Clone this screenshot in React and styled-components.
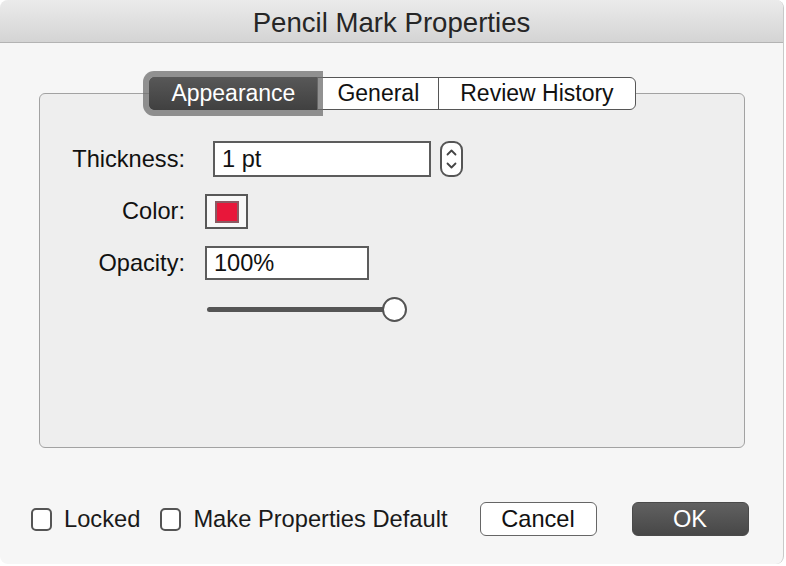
import React from 'react'
import styled, {createGlobalStyle} from 'styled-components'

const Global = createGlobalStyle`
    html, body {
        margin: 0;
        padding: 0;
        background: #ffffff;
        font-family: "Liberation Sans", Arial, sans-serif;
    }
`;

const Page = styled.div`
    width: 786px;
    height: 566px;
    display: flex;
    overflow: hidden;
`;

const Window = styled.div`
    width: 783px;
    height: 564px;
    display: flex;
    flex-direction: column;
    background: #f6f6f6;
    border-radius: 8px;
    border-right: 1px solid #c9c9c9;
    overflow: hidden;
`;

const TitleBar = styled.div`
    height: 43px;
    flex: none;
    display: flex;
    align-items: center;
    justify-content: center;
    background: linear-gradient(#ebebeb, #d4d4d4);
    border-bottom: 1px solid #b3b3b3;
    font-size: 27.6px;
    color: #262626;
    padding-top: 3px;
    box-sizing: border-box;
`;

const Body = styled.div`
    flex: 1;
    display: flex;
    flex-direction: column;
    padding: 34px 38px 0 39px;
`;

const TabRow = styled.div`
    display: flex;
    justify-content: center;
    position: relative;
    z-index: 1;
    padding-left: 1px;
`;

const Tabs = styled.div`
    display: flex;
    height: 33px;
    border: 1.5px solid #565656;
    border-radius: 6px;
    background: #ffffff;
    box-sizing: border-box;
`;

const Tab = styled.div`
    padding: 0 ${({pad}) => pad}px;
    display: flex;
    align-items: center;
    font-size: 23px;
    white-space: nowrap;
    color: ${({active}) => active ? '#ffffff' : '#111111'};
    background: ${({active}) => active ? 'linear-gradient(#585858, #404040)' : 'transparent'};
    border-left: ${({first}) => first ? 'none' : '1.5px solid #565656'};
    border-radius: ${({active}) => active ? '5px 0 0 5px' : '0'};
    box-shadow: ${({active}) => active ? '0 0 0 6px rgba(110,110,110,0.75)' : 'none'};
    margin: ${({active}) => active ? '-1px 0 -1px -1px' : '0'};
    position: relative;
    z-index: ${({active}) => active ? 2 : 1};
`;

const GroupBox = styled.div`
    margin-top: -17px;
    height: 355px;
    box-sizing: border-box;
    border: 1.5px solid #a2a2a2;
    border-radius: 6px;
    background: #eeeeee;
    padding-top: 47px;
`;

const Form = styled.div`
    display: grid;
    grid-template-columns: 145px auto;
    column-gap: 20px;
    row-gap: 17px;
    align-items: center;
`;

const Label = styled.div`
    justify-self: end;
    font-size: 23.6px;
    color: #111111;
`;

const Field = styled.div`
    display: flex;
    align-items: center;
    gap: 9px;
    margin-left: ${({indent}) => indent || 0}px;
`;

const TextInput = styled.div`
    width: ${({w}) => w}px;
    height: ${({h}) => h}px;
    box-sizing: border-box;
    border: 2px solid #5c5c5c;
    background: #ffffff;
    font-size: 23.6px;
    color: #111111;
    display: flex;
    align-items: center;
    padding-left: 7px;
`;

const Stepper = styled.div`
    width: 23px;
    height: 36px;
    box-sizing: border-box;
    border: 2px solid #555555;
    border-radius: 9px;
    background: #ffffff;
    display: flex;
    align-items: center;
    justify-content: center;
`;

const Swatch = styled.div`
    width: 43px;
    height: 35px;
    box-sizing: border-box;
    border: 2px solid #585858;
    background: #f8f8f8;
    display: flex;
    align-items: center;
    justify-content: center;
`;

const SwatchFill = styled.div`
    width: 24px;
    height: 22px;
    box-sizing: border-box;
    border: 2px solid #8b5a62;
    background: #e8173a;
`;

const Slider = styled.div`
    width: 200px;
    height: 24px;
    display: flex;
    align-items: center;
    margin-left: 2px;
`;

const Track = styled.div`
    width: 180px;
    height: 5px;
    border-radius: 3px;
    background: #555555;
    margin-right: -4px;
`;

const Knob = styled.div`
    width: 25px;
    height: 25px;
    box-sizing: border-box;
    border-radius: 50%;
    border: 2px solid #545454;
    background: #ffffff;
`;

const Footer = styled.div`
    display: flex;
    align-items: center;
    margin: 54px -6px 0 -8px;
    height: 34px;
`;

const Check = styled.label`
    display: flex;
    align-items: center;
    flex: none;
    gap: 12px;
    font-size: 23.7px;
    white-space: nowrap;
    color: #1a1a1a;
    margin-right: ${({mr}) => mr}px;
`;

const Box = styled.span`
    width: 21px;
    height: 23px;
    box-sizing: border-box;
    border: 2px solid #555555;
    border-radius: 5px;
    background: #ffffff;
`;

const Button = styled.div`
    width: 117px;
    height: 34px;
    flex: none;
    box-sizing: border-box;
    border-radius: 6px;
    display: flex;
    align-items: center;
    justify-content: center;
    font-size: 23.6px;
    margin-left: ${({ml}) => ml}px;
    color: ${({primary}) => primary ? '#ffffff' : '#111111'};
    background: ${({primary}) => primary ? 'linear-gradient(#616161, #474747)' : '#ffffff'};
    border: 1.5px solid ${({primary}) => primary ? '#4a4a4a' : '#666666'};
`;

function Chevrons() {
    return (
        <svg width="13" height="26" viewBox="0 0 13 26">
            <path d="M2.5 8.5 L6.5 4.5 L10.5 8.5" fill="none" stroke="#444" strokeWidth="1.8" strokeLinecap="round" strokeLinejoin="round" />
            <path d="M2.5 17.5 L6.5 21.5 L10.5 17.5" fill="none" stroke="#444" strokeWidth="1.8" strokeLinecap="round" strokeLinejoin="round" />
        </svg>
    )
}

export default function App() {
    return (
        <Page>
            <Global />
            <Window>
                <TitleBar>Pencil Mark Properties</TitleBar>
                <Body>
                    <TabRow>
                        <Tabs>
                            <Tab active first pad={22}>Appearance</Tab>
                            <Tab pad={19}>General</Tab>
                            <Tab pad={21}>Review History</Tab>
                        </Tabs>
                    </TabRow>
                    <GroupBox>
                        <Form>
                            <Label>Thickness:</Label>
                            <Field indent={8}>
                                <TextInput w={218} h={36}>1 pt</TextInput>
                                <Stepper><Chevrons /></Stepper>
                            </Field>
                            <Label>Color:</Label>
                            <Field>
                                <Swatch><SwatchFill /></Swatch>
                            </Field>
                            <Label>Opacity:</Label>
                            <Field>
                                <TextInput w={164} h={34}>100%</TextInput>
                            </Field>
                            <span />
                            <Slider>
                                <Track />
                                <Knob />
                            </Slider>
                        </Form>
                    </GroupBox>
                    <Footer>
                        <Check mr={20}><Box />Locked</Check>
                        <Check mr={0}><Box />Make Properties Default</Check>
                        <Button ml={32}>Cancel</Button>
                        <Button primary ml={35}>OK</Button>
                    </Footer>
                </Body>
            </Window>
        </Page>
    )
}
